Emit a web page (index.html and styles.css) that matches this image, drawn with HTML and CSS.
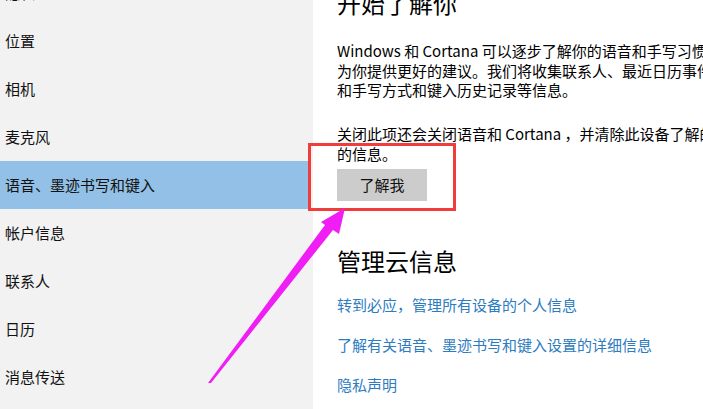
FILE: index.html
```html
<!DOCTYPE html>
<html lang="zh-CN">
<head>
    <meta charset="UTF-8">
    <meta name="viewport" content="width=device-width, initial-scale=1.0">
    <title>语音、墨迹书写和键入</title>
    <link rel="stylesheet" href="styles.css">
</head>
<body>
<div class="page">
    <nav class="sidebar">
        <div class="nav-item nav-hidden">隐私</div>
        <div class="nav-item">位置</div>
        <div class="nav-item">相机</div>
        <div class="nav-item">麦克风</div>
        <div class="nav-item active">语音、墨迹书写和键入</div>
        <div class="nav-item">帐户信息</div>
        <div class="nav-item">联系人</div>
        <div class="nav-item">日历</div>
        <div class="nav-item">消息传送</div>
    </nav>

    <main class="content">
        <h1>开始了解你</h1>
        <p class="intro">Windows 和 Cortana 可以逐步了解你的语音和手写习惯，从而<br>为你提供更好的建议。我们将收集联系人、最近日历事件、语音<br>和手写方式和键入历史记录等信息。</p>
        <p class="note">关闭此项还会关闭语音和 Cortana ，并清除此设备了解的有关你<br>的信息。</p>
        <button class="btn" type="button">了解我</button>

        <h2>管理云信息</h2>
        <div class="links">
            <a href="#">转到必应，管理所有设备的个人信息</a>
            <a href="#">了解有关语音、墨迹书写和键入设置的详细信息</a>
            <a href="#">隐私声明</a>
        </div>
    </main>

    <!-- annotation drawn over the screenshot -->
    <div class="highlight"></div>
    <svg class="arrow" width="703" height="409" viewBox="0 0 703 409">
        <polygon points="208,383 325,225 321,222 345,208 339,234 333,230 211,383" fill="#f01ef5"/>
    </svg>
</div>
</body>
</html>
```

FILE: styles.css
```css
body {
    margin: 0;
    font-family: "Noto Sans CJK SC", "Noto Sans", sans-serif;
    color: #000;
    background-color: #fff;
}
.page {
    position: relative;
    display: flex;
    width: 703px;
    height: 409px;
    overflow: hidden;
}
.sidebar {
    width: 313px;
    flex-shrink: 0;
    background-color: #f2f2f2;
}
.nav-item {
    height: 48px;
    line-height: 48px;
    padding-left: 5px;
    font-size: 15px;
    color: #111;
    width: 303px;
}
.nav-hidden {
    margin-top: -31px;
}
.nav-item.active {
    background-color: #92c0e6;
}
.content {
    padding-left: 24px;
    flex: 1;
    min-width: 0;
}
h1, h2 {
    font-size: 24px;
    font-weight: normal;
    line-height: 32px;
    margin: 0;
}
h1 {
    margin-top: -13px;
}
.intro, .note {
    font-size: 15px;
    margin: 0;
    white-space: nowrap;
}
.intro {
    line-height: 19.5px;
    margin-top: 22px;
}
.note {
    line-height: 20px;
    margin-top: 24px;
}
.btn {
    display: block;
    margin-top: 5px;
    width: 90px;
    height: 32px;
    border: none;
    background-color: #cccccc;
    font-family: inherit;
    font-size: 15px;
    color: #111;
    padding: 0;
}
h2 {
    margin-top: 44px;
}
.links {
    display: flex;
    flex-direction: column;
    align-items: flex-start;
    gap: 20px;
    margin-top: 18px;
}
.links a {
    font-size: 15px;
    line-height: 20px;
    color: #2c7cbf;
    text-decoration: none;
}
.highlight {
    position: absolute;
    left: 308px;
    top: 143px;
    width: 142px;
    height: 62px;
    border: 3px solid #f23b3b;
}
.arrow {
    position: absolute;
    left: 0;
    top: 0;
}
```
